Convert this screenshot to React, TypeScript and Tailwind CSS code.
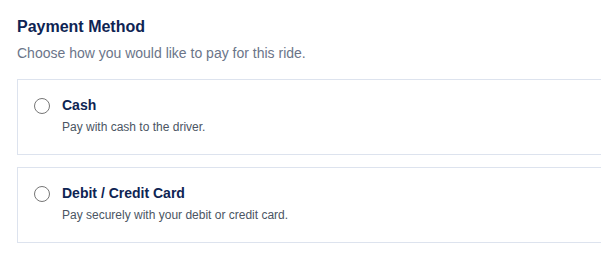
import { useState } from "react";

const methods = [
  { id: "cash", label: "Cash", description: "Pay with cash to the driver." },
  {
    id: "card",
    label: "Debit / Credit Card",
    description: "Pay securely with your debit or credit card.",
  },
];

export default function App() {
  const [selected, setSelected] = useState<string | null>(null);

  return (
    <div
      className="w-[601px] h-[263px] overflow-hidden bg-white pl-[17px] pt-[17px]"
      style={{ fontFamily: '"Liberation Sans", Arial, sans-serif' }}
    >
      <h2 className="text-[16px] font-bold leading-5 text-[#0e2453]">Payment Method</h2>
      <p className="mt-[6px] text-[14px] leading-5 text-[#6b7589]">
        Choose how you would like to pay for this ride.
      </p>
      <div className="mt-4 flex w-[640px] flex-col gap-3">
        {methods.map((m) => (
          <label
            key={m.id}
            className="flex h-[76px] cursor-pointer items-start gap-3 border border-[#dde3ee] bg-white pl-4 pt-[17px]"
          >
            <input
              type="radio"
              name="payment"
              checked={selected === m.id}
              onChange={() => setSelected(m.id)}
              className="mt-[1px] h-4 w-4 appearance-none rounded-full border border-[#767676] bg-white"
            />
            <div>
              <div className="text-[14px] font-bold leading-4 text-[#0e2453]">{m.label}</div>
              <div className="mt-[6px] text-[12px] leading-4 text-[#4b5563]">{m.description}</div>
            </div>
          </label>
        ))}
      </div>
    </div>
  );
}
